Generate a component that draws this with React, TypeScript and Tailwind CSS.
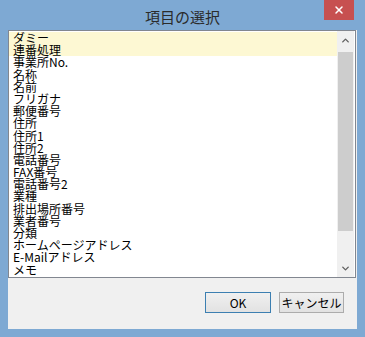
import { X, ChevronUp, ChevronDown } from "lucide-react";

const items = [
  "ダミー",
  "連番処理",
  "事業所No.",
  "名称",
  "名前",
  "フリガナ",
  "郵便番号",
  "住所",
  "住所1",
  "住所2",
  "電話番号",
  "FAX番号",
  "電話番号2",
  "業種",
  "排出場所番号",
  "業者番号",
  "分類",
  "ホームページアドレス",
  "E-Mailアドレス",
  "メモ",
];

const font = { fontFamily: '"Noto Sans CJK JP", "Liberation Sans", sans-serif' };

export default function App() {
  return (
    <div
      className="w-[365px] h-[337px] bg-[#7ea9d3] flex flex-col px-2 pb-2"
      style={font}
    >
      {/* title bar */}
      <div className="relative h-[30px] flex items-center justify-center">
        <span className="text-[15px] text-[#2b2b2b] leading-none pt-[2px]">
          項目の選択
        </span>
        <div className="absolute right-[3px] top-0 w-[30px] h-[20px] bg-[#c75050] flex items-center justify-center">
          <X size={12} strokeWidth={3} className="text-white" />
        </div>
      </div>

      <div className="flex-1 bg-[#f0f0f0] flex flex-col">
        {/* list box */}
        <div className="h-[248px] mr-[1px] border border-[#828790] bg-white flex">
          <div className="flex-1 pt-[1px] text-[12px] text-black">
            {items.map((item, i) => (
              <div
                key={item}
                className={`h-[12.2px] leading-[12px] pl-[4px] whitespace-nowrap ${
                  i < 2 ? "bg-[#fdf8d3]" : ""
                }`}
              >
                {item}
              </div>
            ))}
          </div>
          <div className="w-[17px] bg-[#f0f0f0] flex flex-col mr-[1px]">
            <div className="h-[19px] flex items-center justify-center">
              <ChevronUp size={11} strokeWidth={3} className="text-[#606060]" />
            </div>
            <div className="flex-1 flex flex-col px-[1px] pt-[2px]">
              <div className="h-[179px] bg-[#cdcdcd]" />
            </div>
            <div className="h-[17px] flex items-center justify-center">
              <ChevronDown size={11} strokeWidth={3} className="text-[#606060]" />
            </div>
          </div>
        </div>

        {/* buttons */}
        <div className="flex justify-end gap-[8px] pr-[13px] mt-[14px]">
          <button className="w-[66px] h-[21px] border border-[#3c7fb1] bg-gradient-to-b from-[#f0f0f0] to-[#e2e2e2] text-[12px] text-black leading-none">
            OK
          </button>
          <button className="w-[65px] h-[21px] border border-[#acacac] bg-gradient-to-b from-[#f0f0f0] to-[#e2e2e2] text-[12px] text-black leading-none">
            キャンセル
          </button>
        </div>
      </div>
    </div>
  );
}
